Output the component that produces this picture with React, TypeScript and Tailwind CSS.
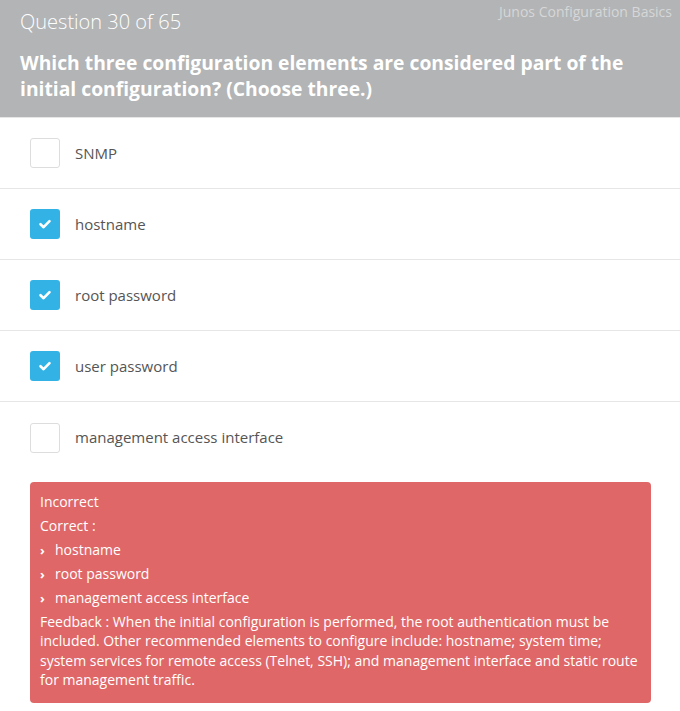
import React from "react";

const options = [
  { label: "SNMP", checked: false },
  { label: "hostname", checked: true },
  { label: "root password", checked: true },
  { label: "user password", checked: true },
  { label: "management access interface", checked: false },
];

function Check() {
  return (
    <svg width="14" height="14" viewBox="0 0 14 14" fill="none">
      <path d="M2.5 7.2 L5.6 10.2 L11.5 4.2" stroke="white" strokeWidth="2.6" strokeLinecap="round" strokeLinejoin="round" />
    </svg>
  );
}

export default function App() {
  return (
    <div className="w-[680px] h-[711px] bg-white overflow-hidden" style={{ fontFamily: '"Open Sans", sans-serif' }}>
      <div className="bg-[#b2b4b5] px-5 pt-[8px] relative h-[118px] border-b border-[#e6e6e6]">
        <div className="text-white text-[20px] font-light leading-[28px]">Question 30 of 65</div>
        <div className="absolute right-[8px] top-[2px] text-[14px] text-[#d6d7d8] leading-[20px]">Junos Configuration Basics</div>
        <div className="mt-[14px] w-[625px] text-white text-[19.3px] font-bold leading-[26px]">
          Which three configuration elements are considered part of the initial configuration? (Choose three.)
        </div>
      </div>
      <div>
        {options.map((o, i) => (
          <div key={i} className={`flex items-center h-[71px] pl-[30px] ${i < options.length - 1 ? "border-b border-[#e6e6e6]" : ""}`}>
            {o.checked ? (
              <div className="w-[30px] h-[30px] rounded-[3px] bg-[#33b3e5] flex items-center justify-center">
                <Check />
              </div>
            ) : (
              <div className="w-[30px] h-[30px] rounded-[3px] border border-[#dddddd] bg-white" />
            )}
            <span className="ml-[15px] text-[15px] text-[#555555]">{o.label}</span>
          </div>
        ))}
      </div>
      <div className="ml-[30px] mt-[9px] w-[621px] rounded-[4px] bg-[#e06767] text-white text-[14px] px-[10px] pt-[10px] pb-[13px]">
        <div className="leading-[20px] mb-[4px]">Incorrect</div>
        <div className="leading-[20px] mb-[4px]">Correct :</div>
        {["hostname", "root password", "management access interface"].map((t) => (
          <div key={t} className="leading-[20px] mb-[4px] flex items-center">
            <span className="w-[15px] text-[13px] font-bold">›</span>
            <span>{t}</span>
          </div>
        ))}
        <div className="leading-[19.4px]">
          Feedback : When the initial configuration is performed, the root authentication must be included. Other recommended elements to configure include: hostname; system time; system services for remote access (Telnet, SSH); and management interface and static route for management traffic.
        </div>
      </div>
    </div>
  );
}
